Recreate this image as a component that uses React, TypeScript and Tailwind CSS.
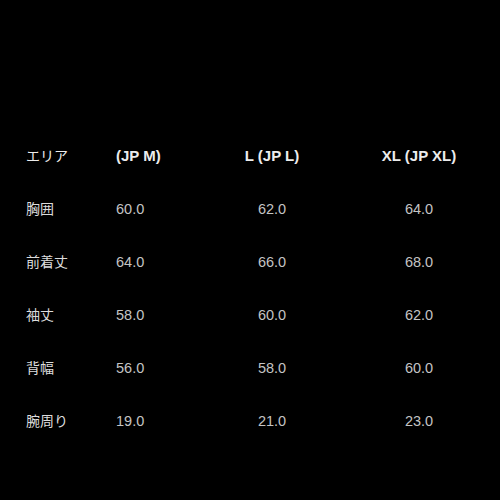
const rows = [
  { label: '胸囲', m: '60.0', l: '62.0', xl: '64.0' },
  { label: '前着丈', m: '64.0', l: '66.0', xl: '68.0' },
  { label: '袖丈', m: '58.0', l: '60.0', xl: '62.0' },
  { label: '背幅', m: '56.0', l: '58.0', xl: '60.0' },
  { label: '腕周り', m: '19.0', l: '21.0', xl: '23.0' },
];

const font = { fontFamily: '"Liberation Sans", "Noto Sans CJK JP", sans-serif' };

export default function App() {
  return (
    <div className="h-[500px] w-[500px] bg-black pl-[26px] pt-[130px]" style={font}>
      <div className="grid grid-cols-[90px_84px_144px_150px] text-[14.5px]">
        <div className="flex h-[53px] items-center text-[14px] text-[#ececec]">エリア</div>
        <div className="flex h-[53px] items-center text-[15px] font-bold text-[#ececec]">(JP M)</div>
        <div className="flex h-[53px] items-center justify-center text-[15px] font-bold text-[#ececec]">L (JP L)</div>
        <div className="flex h-[53px] items-center justify-center text-[15px] font-bold text-[#ececec]">XL (JP XL)</div>
        {rows.map((r) => (
          <div key={r.label} className="contents">
            <div className="flex h-[53px] items-center text-[14px] text-[#dcdcdc]">{r.label}</div>
            <div className="flex h-[53px] items-center text-[#c4c4c4]">{r.m}</div>
            <div className="flex h-[53px] items-center justify-center text-[#c4c4c4]">{r.l}</div>
            <div className="flex h-[53px] items-center justify-center text-[#c4c4c4]">{r.xl}</div>
          </div>
        ))}
      </div>
    </div>
  );
}
